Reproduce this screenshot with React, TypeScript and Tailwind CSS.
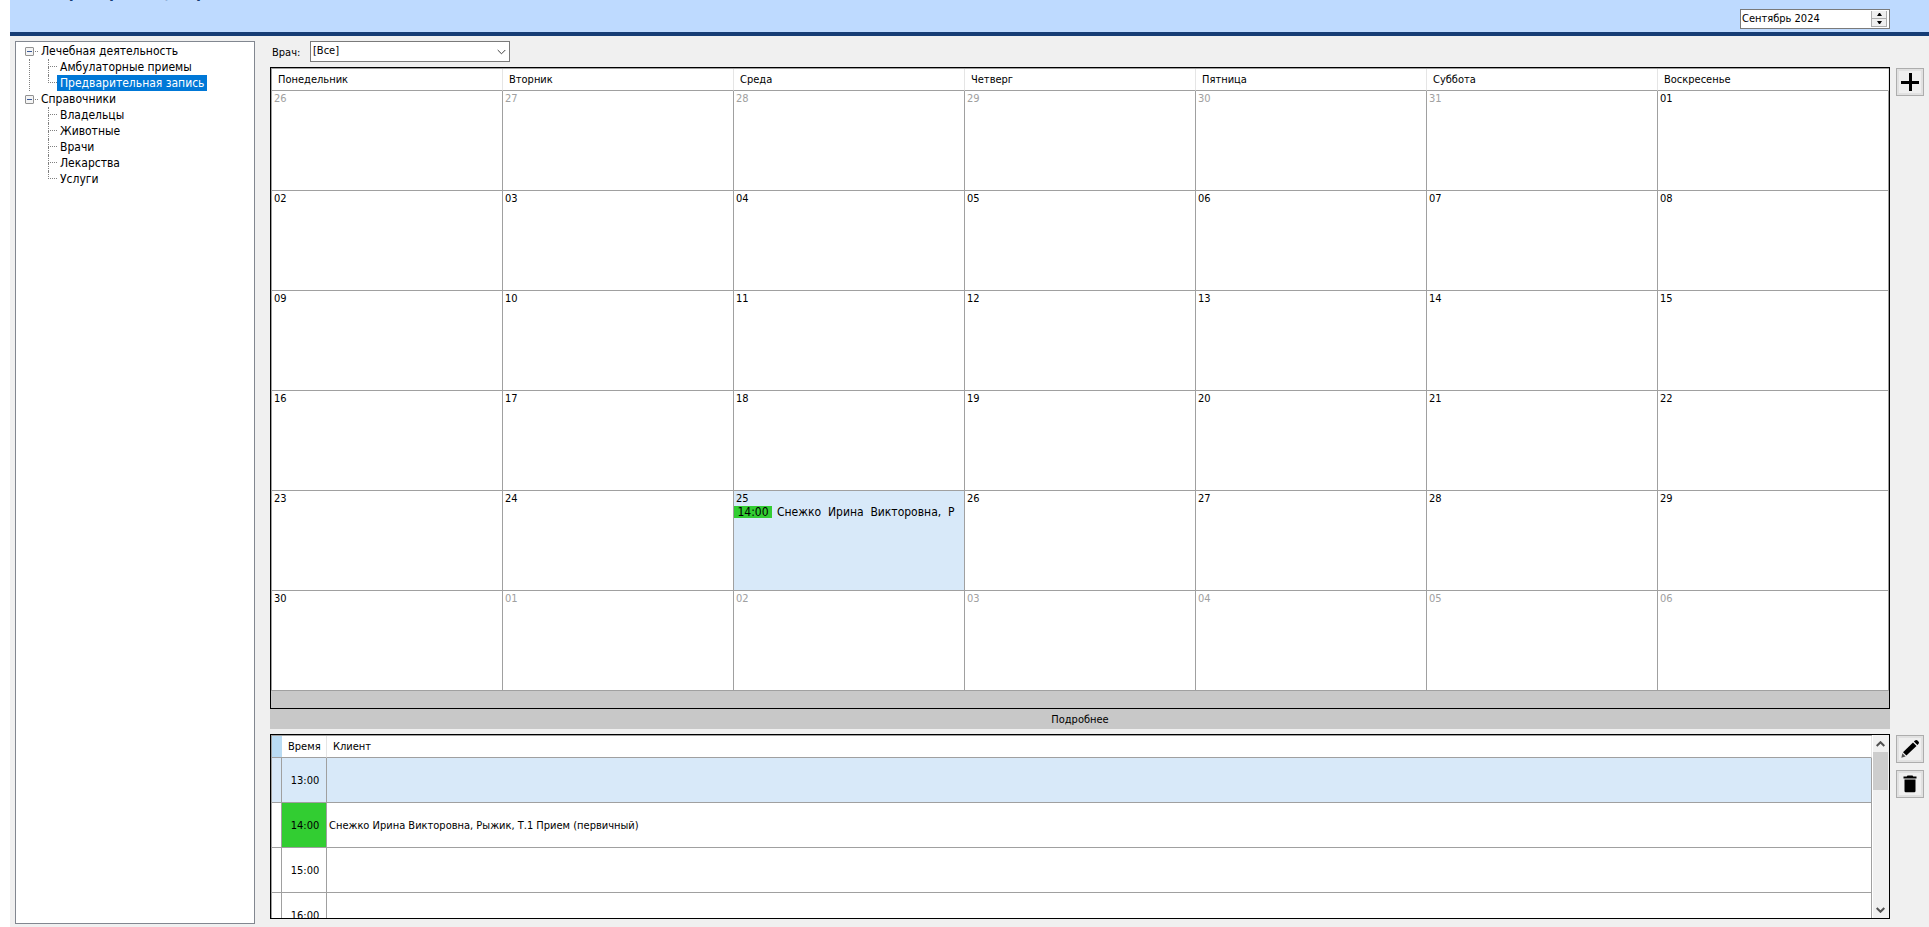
import { ReactNode } from "react";

interface DayCell {
  day: string;
  muted?: boolean;
  event?: { time: string; text: string };
}

interface TreeGroup {
  title: string;
  items: string[];
}

interface Slot {
  time: string;
  client?: string;
  selected?: boolean;
  busy?: boolean;
}

const weekDays = ["Понедельник", "Вторник", "Среда", "Четверг", "Пятница", "Суббота", "Воскресенье"];

const tree: TreeGroup[] = [
  { title: "Лечебная деятельность", items: ["Амбулаторные приемы", "Предварительная запись"] },
  { title: "Справочники", items: ["Владельцы", "Животные", "Врачи", "Лекарства", "Услуги"] },
];

const activeItem = "Предварительная запись";

const slots: Slot[] = [
  { time: "13:00", selected: true },
  {
    time: "14:00",
    client: "Снежко Ирина Викторовна, Рыжик, Т.1 Прием (первичный)",
    busy: true,
  },
  { time: "15:00" },
  { time: "16:00" },
];

// six weeks starting from Monday, 26 August
const firstDay = new Date(2024, 7, 26);

const weeks: DayCell[][] = Array.from({ length: 6 }, (_, week) =>
  Array.from({ length: 7 }, (_, idx) => {
    const date = new Date(2024, firstDay.getMonth(), firstDay.getDate() + week * 7 + idx);
    const inMonth = date.getMonth() === 8;
    const day = String(date.getDate()).padStart(2, "0");
    if (inMonth && day === "25") {
      return { day, event: { time: "14:00", text: "Снежко  Ирина  Викторовна,  Р" } };
    }
    return { day, muted: !inMonth };
  })
);

function ToolButton({ label, children }: { label: string; children: ReactNode }) {
  return (
    <button
      type="button"
      aria-label={label}
      className="flex h-7 w-7 items-center justify-center border border-[#adadad] bg-[#efefef] shadow-[inset_0_0_0_2px_#e1e1e1]"
    >
      {children}
    </button>
  );
}

function PlusIcon() {
  return (
    <svg className="h-[18px] w-[18px]" viewBox="0 0 18 18" fill="none" stroke="black" strokeWidth="3">
      <path d="M9.5 0v18M0 9.5h18" />
    </svg>
  );
}

function PencilIcon() {
  return (
    <svg className="h-[18px] w-[18px]" viewBox="0 0 18 18" fill="black">
      <path d="M12.9 1.6 14 .6a1.8 1.8 0 0 1 2.5 0l.9.9a1.8 1.8 0 0 1 0 2.5l-1 1.1z" />
      <path d="M12 2.5 15.5 6 5.4 15.6 2 12.3z" />
      <path d="M1.4 13.2 4.6 16.4.3 17.7z" fill="#555" />
    </svg>
  );
}

function TrashIcon() {
  return (
    <svg className="h-[18px] w-[14px]" viewBox="0 0 14 18" fill="black">
      <path d="M4.500.5h5l.8 1H13.500v2H.5v-2h3.200zM1.500 4.500h11V16a1.200 1.200 0 0 1-1.200 1.200H2.700A1.200 1.200 0 0 1 1.500 16z" />
    </svg>
  );
}

function Chevron({ up = false, className = "" }: { up?: boolean; className?: string }) {
  return (
    <svg className={className} viewBox="0 0 9 6" fill="none" stroke="currentColor">
      <path d={up ? "M.7 5 4.5 1.2 8.3 5" : "M.7 1 4.5 4.8 8.3 1"} />
    </svg>
  );
}

function SpinArrow({ up = false }: { up?: boolean }) {
  return (
    <svg className="h-[3px] w-[5px]" viewBox="0 0 5 3" fill="black">
      <path d={up ? "M0 3h5L3 0H2z" : "M0 0h5L3 3H2z"} />
    </svg>
  );
}

function Header() {
  return (
    <header className="flex h-9 shrink-0 justify-between overflow-hidden border-b-4 border-[#163d75] bg-[#bedaff] pr-[39px] pl-5">
      <h1 className="-mt-[17px] text-[16px] leading-5 font-bold whitespace-nowrap text-[#163d75]">
        Ветеринарный центр
      </h1>
      <div className="mt-[9px] flex h-5 w-[150px] border border-[#7a7a7a] bg-white py-px pr-0.5">
        <input
          aria-label="Месяц"
          defaultValue="Сентябрь 2024"
          className="min-w-0 flex-1 bg-transparent pt-px pl-px text-[11px] outline-none"
        />
        <div className="flex w-4 flex-col">
          <button
            type="button"
            aria-label="Следующий месяц"
            className="flex flex-1 items-center justify-center border border-t-0 border-[#adadad] bg-[#efefef]"
          >
            <SpinArrow up />
          </button>
          <button
            type="button"
            aria-label="Предыдущий месяц"
            className="flex flex-1 items-center justify-center border border-t-0 border-[#adadad] bg-[#efefef]"
          >
            <SpinArrow />
          </button>
        </div>
      </div>
    </header>
  );
}

function TreeItem({ label, last }: { label: string; last: boolean }) {
  const active = label === activeItem;
  return (
    <li className="flex h-4">
      <span className="w-[9px]">
        <span className="block h-2 border-b border-l border-dotted border-[#808080]" />
        {!last && <span className="block h-2 border-l border-dotted border-[#808080]" />}
      </span>
      <a href="#" className={`px-[3px] ${active ? "bg-[#0078d7] text-white" : ""}`}>
        {label}
      </a>
    </li>
  );
}

function Sidebar() {
  return (
    <nav className="w-60 shrink-0 border border-[#828790] bg-white pt-px text-[12px] leading-4 whitespace-nowrap">
      {tree.map((group, idx) => (
        <div key={group.title}>
          <div className="flex h-4 items-center pl-[9px]">
            <button
              type="button"
              aria-label={`Свернуть: ${group.title}`}
              className="flex h-[9px] w-[9px] items-center justify-center rounded-[1px] border border-[#919191] bg-[#f4f4f4]"
            >
              <span className="h-px w-[5px] bg-[#3b5a9a]" />
            </button>
            <span className="mr-[3px] ml-px w-[3px] border-t border-dotted border-[#808080]" />
            {group.title}
          </div>
          <ul
            className={`ml-[13px] border-l border-dotted pl-[18px] ${
              idx < tree.length - 1 ? "border-[#808080]" : "border-transparent"
            }`}
          >
            {group.items.map((item, itemIdx) => (
              <TreeItem key={item} label={item} last={itemIdx === group.items.length - 1} />
            ))}
          </ul>
        </div>
      ))}
    </nav>
  );
}

function DoctorFilter() {
  return (
    <div className="flex h-[21px] items-center text-[11px]">
      <label htmlFor="doctor" className="w-10 pt-1 pl-0.5">
        Врач:
      </label>
      <div className="relative h-full w-[200px]">
        <select
          id="doctor"
          className="h-full w-full appearance-none border border-[#7a7a7a] bg-white pr-5 pl-0.5"
        >
          <option>[Все]</option>
        </select>
        <Chevron className="pointer-events-none absolute top-2 right-1 h-[6px] w-[9px] text-[#404040]" />
      </div>
    </div>
  );
}

function Calendar() {
  return (
    <div className="min-w-0 flex-1 border border-black bg-[#c8c8c8] pb-[17px]">
      <div className="border-t border-l border-[#a0a0a0]">
        <table className="w-full table-fixed border-separate border-spacing-0 bg-white text-left text-[11px]">
          <thead>
            <tr>
              {weekDays.map((name) => (
                <th
                  key={name}
                  className="h-[22px] border-r border-b border-r-[#e5e5e5] border-b-[#a0a0a0] p-0 pt-0.5 pl-1.5 font-normal"
                >
                  {name}
                </th>
              ))}
            </tr>
          </thead>
          <tbody>
            {weeks.map((week, idx) => (
              <tr key={idx}>
                {week.map((cell) => (
                  <td
                    key={cell.day}
                    className={`h-[100px] overflow-hidden border-r border-b border-[#a0a0a0] p-0 align-top leading-[15px] ${
                      cell.event ? "bg-[#d8e9f9]" : ""
                    }`}
                  >
                    <div className={`pl-0.5 ${cell.muted ? "text-[#a0a0a0]" : ""}`}>{cell.day}</div>
                    {cell.event && (
                      <div className="flex gap-[5px] text-[12px] leading-3 whitespace-pre">
                        <span className="w-[38px] bg-[#32cd32] text-center">{cell.event.time}</span>
                        <span>{cell.event.text}</span>
                      </div>
                    )}
                  </td>
                ))}
              </tr>
            ))}
          </tbody>
        </table>
      </div>
    </div>
  );
}

function ScrollBar() {
  return (
    <div className="flex w-[17px] shrink-0 flex-col items-center border-l border-white bg-[#f0f0f0] pr-px text-[#505050]">
      <div className="flex h-[17px] items-center">
        <Chevron up className="h-[6px] w-[9px] stroke-2" />
      </div>
      <div className="h-[38px] w-[15px] bg-[#cdcdcd]" />
      <div className="mt-auto flex h-[17px] items-center">
        <Chevron className="h-[6px] w-[9px] stroke-2" />
      </div>
    </div>
  );
}

function Schedule() {
  return (
    <div className="flex min-w-0 flex-1 overflow-hidden border border-black bg-white">
      <div className="min-w-0 flex-1 border-t border-l border-[#a0a0a0]">
        <table className="w-full table-fixed border-separate border-spacing-0 text-left text-[11px]">
          <thead>
            <tr>
              <th className="h-[22px] w-[10px] border-b border-[#a0a0a0] bg-[#b9dbf3] p-0" />
              <th className="w-[45px] border-r border-b border-r-[#e5e5e5] border-b-[#a0a0a0] p-0 pt-0.5 pl-1.5 font-normal">
                Время
              </th>
              <th className="border-r border-b border-r-[#e5e5e5] border-b-[#a0a0a0] p-0 pt-0.5 pl-1.5 font-normal">
                Клиент
              </th>
            </tr>
          </thead>
          <tbody>
            {slots.map((slot) => (
              <tr key={slot.time} className={slot.selected ? "bg-[#d8e9f9]" : ""}>
                <td className="h-[45px] border-r border-b border-[#a0a0a0] p-0" />
                <td
                  className={`border-r border-b border-[#a0a0a0] p-0 pt-0.5 pl-0.5 text-center ${
                    slot.busy ? "bg-[#32cd32]" : ""
                  }`}
                >
                  {slot.time}
                </td>
                <td className="border-r border-b border-[#a0a0a0] p-0 pt-0.5 pl-0.5">{slot.client}</td>
              </tr>
            ))}
          </tbody>
        </table>
      </div>
      <ScrollBar />
    </div>
  );
}

export default function App() {
  return (
    <div className="h-screen bg-white pl-2.5 font-['DejaVu_Sans_Condensed','DejaVu_Sans',sans-serif] text-black">
      <div className="flex h-full flex-col bg-[#f0f0f0]">
        <Header />
        <div className="flex min-h-0 flex-1 gap-[15px] pt-[5px] pr-[5px] pb-[3px] pl-[5px]">
          <Sidebar />
          <main className="flex min-w-0 flex-1 flex-col pb-[5px]">
            <DoctorFilter />
            <div className="mt-[5px] flex gap-1.5">
              <Calendar />
              <div className="pt-px">
                <ToolButton label="Добавить запись">
                  <PlusIcon />
                </ToolButton>
              </div>
            </div>
            <button type="button" className="mr-[34px] h-5 shrink-0 bg-[#c8c8c8] pt-0.5 text-[11px]">
              Подробнее
            </button>
            <div className="mt-[5px] flex min-h-0 flex-1 gap-1.5">
              <Schedule />
              <div className="flex flex-col gap-[7px] pt-px">
                <ToolButton label="Изменить запись">
                  <PencilIcon />
                </ToolButton>
                <ToolButton label="Удалить запись">
                  <TrashIcon />
                </ToolButton>
              </div>
            </div>
          </main>
        </div>
      </div>
    </div>
  );
}
